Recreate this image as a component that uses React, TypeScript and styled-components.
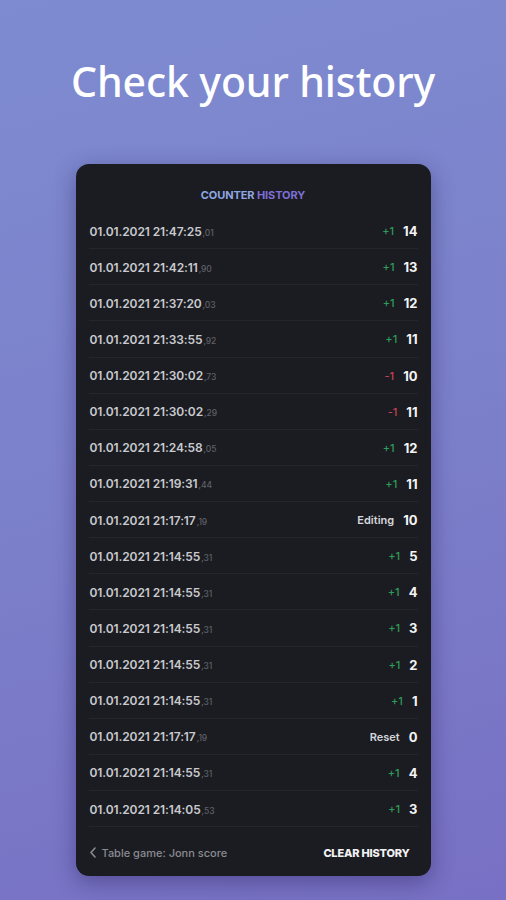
import React from "react";
import styled, { createGlobalStyle } from "styled-components";

const Global = createGlobalStyle`
  html, body { margin: 0; padding: 0; }
  body {
    width: 506px;
    height: 900px;
    overflow: hidden;
    background: linear-gradient(165deg, #7e8bd0 0%, #7c82cb 45%, #7870c4 100%);
    font-family: Inter, "Noto Sans", sans-serif;
  }
`;

const Page = styled.div`
  display: flex;
  flex-direction: column;
  align-items: center;
  padding-top: 54px;
`;

const Title = styled.h1`
  margin: 0;
  height: 54px;
  line-height: 54px;
  font-family: "Noto Sans", sans-serif;
  font-weight: 500;
  font-size: 41px;
  color: #ffffff;
  letter-spacing: -0.1px;
`;

const Card = styled.div`
  margin-top: 56px;
  width: 355px;
  height: 712px;
  box-sizing: border-box;
  background: #1b1c21;
  border-radius: 13px;
  box-shadow: 0 6px 22px rgba(40, 30, 90, 0.45);
  display: flex;
  flex-direction: column;
  padding: 24px 13px 0 13px;
`;

const Header = styled.div`
  height: 14px;
  line-height: 14px;
  text-align: center;
  font-size: 11px;
  font-weight: 700;
  letter-spacing: -0.1px;
  margin-bottom: 11px;
`;

const HeaderPart = styled.span<{ $color: string }>`
  color: ${(p) => p.$color};
`;

const List = styled.div`
  display: flex;
  flex-direction: column;
`;

const Row = styled.div`
  height: 36.13px;
  box-sizing: border-box;
  border-bottom: 1px solid #25262c;
  display: flex;
  align-items: center;
  justify-content: space-between;
  padding: 1px 0 0 1px;
`;

const Stamp = styled.span`
  font-size: 12px;
  font-weight: 600;
  color: #c9cacf;
  letter-spacing: -0.1px;
`;

const Ms = styled.span`
  font-size: 8.5px;
  font-weight: 500;
  color: #5f6068;
  margin-left: 1px;
`;

const Right = styled.div`
  display: flex;
  align-items: center;
  gap: 9px;
`;

const Delta = styled.span<{ $kind: "up" | "down" | "text" }>`
  font-size: 11px;
  font-weight: ${(p) => (p.$kind === "text" ? 600 : 500)};
  color: ${(p) =>
    p.$kind === "up" ? "#2f9a5a" : p.$kind === "down" ? "#c2434f" : "#d4d5da"};
`;

const Value = styled.span`
  font-size: 13px;
  font-weight: 700;
  color: #f4f4f6;
`;

const Footer = styled.div`
  flex: 1;
  display: flex;
  align-items: center;
  justify-content: space-between;
  padding: 2px 8px 0 0;
`;

const Back = styled.div`
  display: flex;
  align-items: center;
  gap: 5px;
  font-size: 11px;
  color: #8a8b92;
  font-weight: 500;
`;

const Clear = styled.span`
  font-size: 11px;
  font-weight: 800;
  color: #f2f2f4;
  letter-spacing: -0.2px;
`;

type Item = { t: string; ms: string; d: string; v: string };

const items: Item[] = [
  { t: "01.01.2021 21:47:25", ms: "01", d: "+1", v: "14" },
  { t: "01.01.2021 21:42:11", ms: "90", d: "+1", v: "13" },
  { t: "01.01.2021 21:37:20", ms: "03", d: "+1", v: "12" },
  { t: "01.01.2021 21:33:55", ms: "92", d: "+1", v: "11" },
  { t: "01.01.2021 21:30:02", ms: "73", d: "-1", v: "10" },
  { t: "01.01.2021 21:30:02", ms: "29", d: "-1", v: "11" },
  { t: "01.01.2021 21:24:58", ms: "05", d: "+1", v: "12" },
  { t: "01.01.2021 21:19:31", ms: "44", d: "+1", v: "11" },
  { t: "01.01.2021 21:17:17", ms: "19", d: "Editing", v: "10" },
  { t: "01.01.2021 21:14:55", ms: "31", d: "+1", v: "5" },
  { t: "01.01.2021 21:14:55", ms: "31", d: "+1", v: "4" },
  { t: "01.01.2021 21:14:55", ms: "31", d: "+1", v: "3" },
  { t: "01.01.2021 21:14:55", ms: "31", d: "+1", v: "2" },
  { t: "01.01.2021 21:14:55", ms: "31", d: "+1", v: "1" },
  { t: "01.01.2021 21:17:17", ms: "19", d: "Reset", v: "0" },
  { t: "01.01.2021 21:14:55", ms: "31", d: "+1", v: "4" },
  { t: "01.01.2021 21:14:05", ms: "53", d: "+1", v: "3" },
];

const kindOf = (d: string): "up" | "down" | "text" =>
  d.startsWith("+") ? "up" : d.startsWith("-") ? "down" : "text";

export default function App() {
  return (
    <>
      <Global />
      <Page>
        <Title>Check your history</Title>
        <Card>
          <Header>
            <HeaderPart $color="#8ea6e2">COUNTER </HeaderPart>
            <HeaderPart $color="#7d6fd6">HISTORY</HeaderPart>
          </Header>
          <List>
            {items.map((it, i) => (
              <Row key={i}>
                <Stamp>
                  {it.t}
                  <Ms>,{it.ms}</Ms>
                </Stamp>
                <Right>
                  <Delta $kind={kindOf(it.d)}>{it.d}</Delta>
                  <Value>{it.v}</Value>
                </Right>
              </Row>
            ))}
          </List>
          <Footer>
            <Back>
              <svg width="8" height="11" viewBox="0 0 8 11" fill="none">
                <path d="M6 1L2 5.5L6 10" stroke="#8a8b92" strokeWidth="1.6" strokeLinecap="round" strokeLinejoin="round" />
              </svg>
              Table game: Jonn score
            </Back>
            <Clear>CLEAR HISTORY</Clear>
          </Footer>
        </Card>
      </Page>
    </>
  );
}
